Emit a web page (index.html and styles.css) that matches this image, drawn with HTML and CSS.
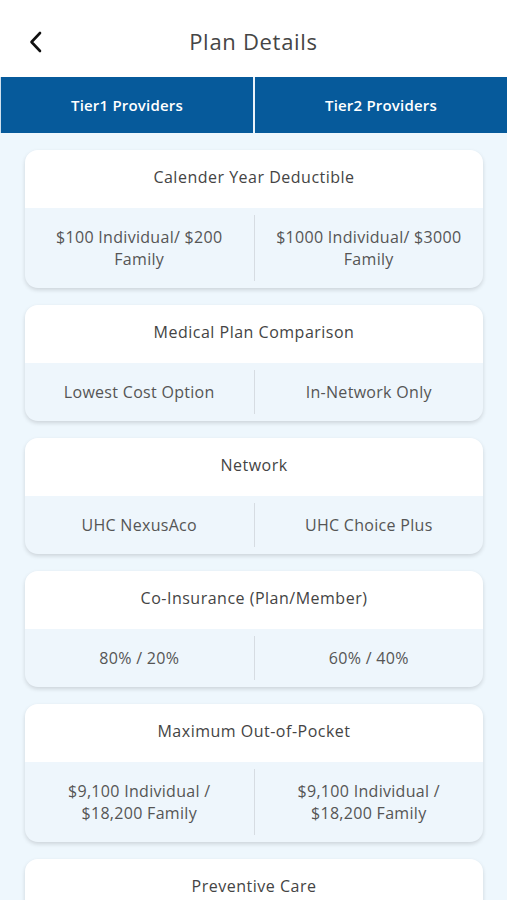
FILE: index.html
```html
<!DOCTYPE html>
<html lang="en">
<head>
    <meta charset="UTF-8">
    <meta name="viewport" content="width=device-width, initial-scale=1.0">
    <title>Plan Details</title>
    <link rel="stylesheet" href="styles.css">
</head>
<body>
    <div class="screen">
        <header class="top-bar">
            <button class="back-btn" aria-label="Back">
                <svg width="16" height="22" viewBox="0 0 16 22">
                    <path d="M12 2 L3.5 11 L12 20" fill="none" stroke="#111" stroke-width="2.6" stroke-linecap="round" stroke-linejoin="round"/>
                </svg>
            </button>
            <h1>Plan Details</h1>
        </header>

        <div class="tabs">
            <div class="tab">Tier1 Providers</div>
            <div class="tab">Tier2 Providers</div>
        </div>

        <div class="plan-list">
            <div class="plan-card">
                <div class="plan-title">Calender Year Deductible</div>
                <div class="plan-values">
                    <div class="value">$100 Individual/ $200 Family</div>
                    <div class="value">$1000 Individual/ $3000 Family</div>
                </div>
            </div>

            <div class="plan-card">
                <div class="plan-title">Medical Plan Comparison</div>
                <div class="plan-values">
                    <div class="value">Lowest Cost Option</div>
                    <div class="value">In-Network Only</div>
                </div>
            </div>

            <div class="plan-card">
                <div class="plan-title">Network</div>
                <div class="plan-values">
                    <div class="value">UHC NexusAco</div>
                    <div class="value">UHC Choice Plus</div>
                </div>
            </div>

            <div class="plan-card">
                <div class="plan-title">Co-Insurance (Plan/Member)</div>
                <div class="plan-values">
                    <div class="value">80% / 20%</div>
                    <div class="value">60% / 40%</div>
                </div>
            </div>

            <div class="plan-card">
                <div class="plan-title">Maximum Out-of-Pocket</div>
                <div class="plan-values">
                    <div class="value">$9,100 Individual / $18,200 Family</div>
                    <div class="value">$9,100 Individual / $18,200 Family</div>
                </div>
            </div>

            <div class="plan-card">
                <div class="plan-title">Preventive Care</div>
            </div>
        </div>
    </div>
</body>
</html>
```

FILE: styles.css
```css
* {
    box-sizing: border-box;
}

body {
    margin: 0;
    font-family: 'Open Sans', 'Noto Sans', sans-serif;
    background-color: #eef7fd;
    color: #555;
}

.screen {
    height: 900px;
    overflow: hidden;
}

.top-bar {
    position: relative;
    height: 77px;
    background-color: white;
    display: flex;
    align-items: center;
    justify-content: center;
}

.back-btn {
    position: absolute;
    left: 28px;
    top: 31px;
    background: none;
    border: none;
    padding: 0;
    cursor: pointer;
}

.top-bar h1 {
    margin: 0 0 -4px;
    font-size: 22px;
    font-weight: 500;
    color: #454545;
    letter-spacing: 0.7px;
}

.tabs {
    display: flex;
    height: 56px;
    background-color: #065a9b;
    border-left: 1px solid #cfe0ee;
}

.tab {
    flex: 1;
    display: flex;
    align-items: center;
    justify-content: center;
    color: white;
    font-size: 15px;
    font-weight: 600;
    letter-spacing: 0.2px;
}

.tab + .tab {
    border-left: 2px solid #e9f2fa;
}

.plan-list {
    padding: 17px 24px 0 25px;
    display: flex;
    flex-direction: column;
    gap: 17px;
}

.plan-card {
    border-radius: 13px;
    overflow: hidden;
    background-color: #eef6fc;
    box-shadow: 0 2px 4px rgba(0, 0, 0, 0.14);
}

.plan-title {
    background-color: white;
    height: 58px;
    padding-bottom: 4px;
    display: flex;
    align-items: center;
    justify-content: center;
    font-size: 16px;
    font-weight: 500;
    letter-spacing: 0.5px;
    color: #444;
}

.plan-values {
    display: flex;
    padding: 7px 0;
}

.value {
    flex: 1;
    padding: 11px 20px;
    display: flex;
    align-items: center;
    justify-content: center;
    text-align: center;
    font-size: 16px;
    line-height: 22px;
    letter-spacing: 0.3px;
    color: #555;
}

.value + .value {
    border-left: 1.5px solid #d6dce2;
}
```
